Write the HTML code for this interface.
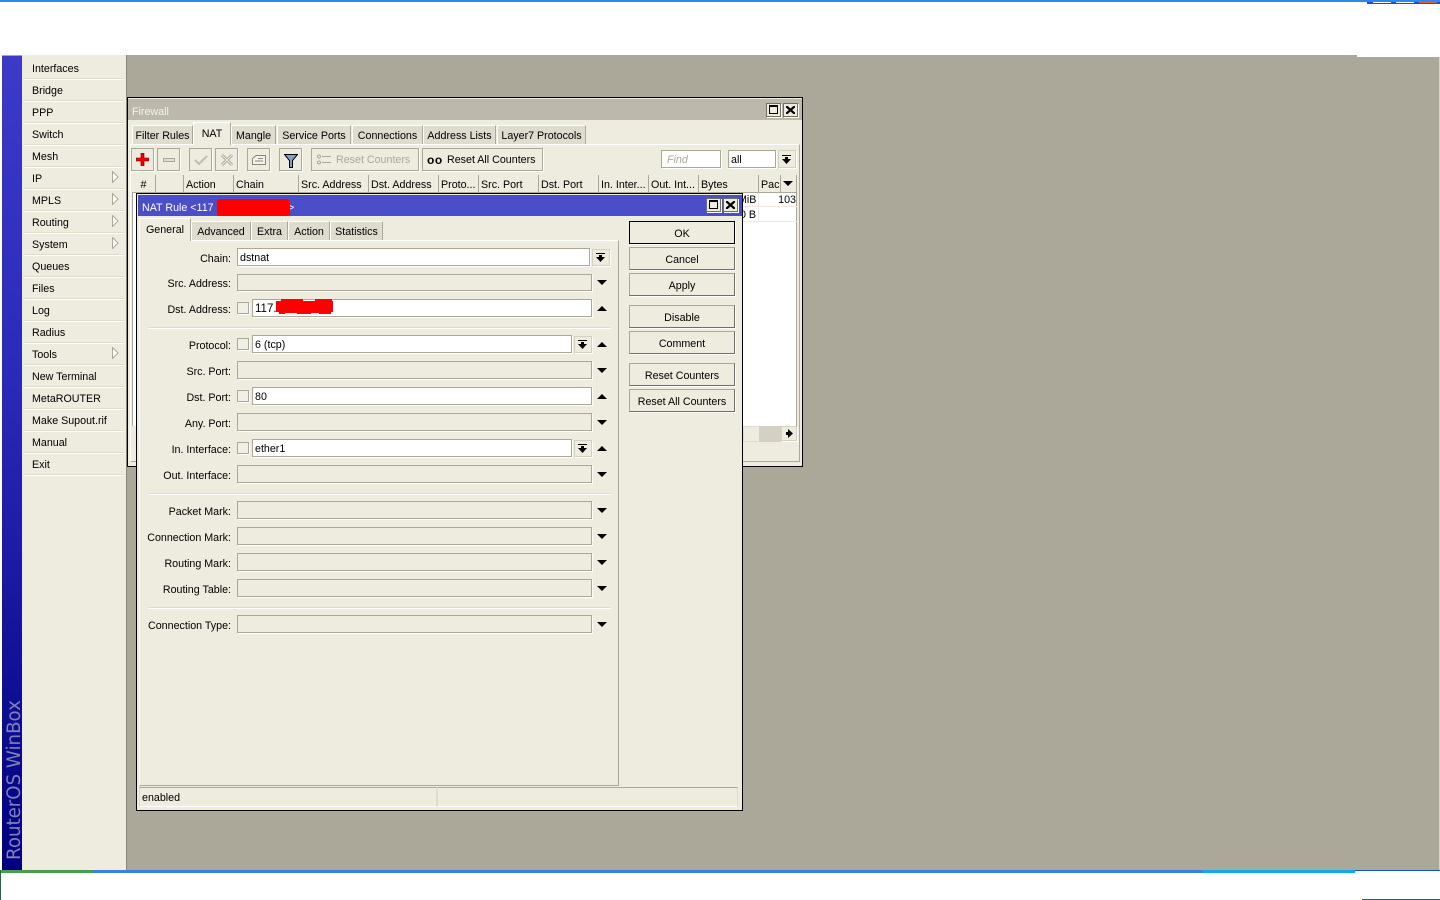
<!DOCTYPE html>
<html><head><meta charset="utf-8"><title>WinBox</title>
<style>
html,body{margin:0;padding:0;background:#fff;width:1440px;height:900px;overflow:hidden}
body{position:relative;font-family:"Liberation Sans",sans-serif;font-size:10.7px;color:#000}
div,svg,span.t{position:absolute;box-sizing:border-box}
.t{position:absolute;white-space:pre;line-height:14px;margin-top:1px}
.r{text-align:right}
.c{display:flex;align-items:center;justify-content:center;white-space:pre;padding-top:2px}
.sep{height:2px;background:#dfdccd;border-bottom:1px solid #fff}
.b{background:#eeebdf;border:1px solid #aca899;border-right-color:#716f64;border-bottom-color:#716f64;box-shadow:1px 1px 0 #fff}
.tb{background:#eeebdf;border:1px solid #aca899;box-shadow:1px 1px 0 #fff}
.i{background:#fff;border:1px solid #aca899;box-shadow:1px 1px 0 #fff;padding-left:2px;line-height:18px;white-space:pre}
.d{background:#eeebdf;border:1px solid #aca899;box-shadow:1px 1px 0 #fff}
.dd{background:#eeebdf;border:1px solid #d4d1c2;box-shadow:1px 1px 0 #fff}
.tab{background:#dedbcf;border-top:1px solid #fff;border-left:1px solid #fff;border-right:1px solid #aca899}
.h{background:#eeebdf;border-right:1px solid #aca899;border-bottom:1px solid #aca899;padding-left:2px;line-height:20px;white-space:pre;overflow:hidden}
.up{width:0;height:0;border-left:5px solid transparent;border-right:5px solid transparent;border-bottom:5px solid #000}
.dn{width:0;height:0;border-left:5px solid transparent;border-right:5px solid transparent;border-top:5px solid #000}
.ar{width:7px;height:12px}
.mb{background:#eeebdf;border:1px solid #716f64;box-shadow:1px 1px 0 #fff}
.g{color:#aca899}
</style></head><body>

<div style="left:0;top:0;width:1440px;height:2px;background:#2f86ee"></div>
<div style="left:1367px;top:2px;width:73px;height:2px;background:#0a55d8"></div>
<div style="left:1373px;top:2px;width:18px;height:1px;background:#fff"></div>
<div style="left:1396px;top:2px;width:18px;height:1px;background:#fff"></div>
<div style="left:1419px;top:2px;width:18px;height:1px;background:#e06040"></div>

<div style="left:2px;top:55px;width:1355px;height:2px;background:#aba899"></div>
<div style="left:2px;top:57px;width:1437px;height:813px;background:#aba899"></div>
<div style="left:1439px;top:57px;width:1px;height:813px;background:#d8d5c8"></div>

<div style="left:2px;top:56px;width:20px;height:814px;background:linear-gradient(#3b3bc8,#2a2ab8 40%,#00007f)"></div>
<div class="t" style="left:-65px;top:769px;width:160px;height:20px;line-height:20px;font-family:'DejaVu Sans',sans-serif;font-size:18.200px;color:#8080b8;transform:rotate(-90deg);text-align:left">RouterOS WinBox</div>

<div style="left:22px;top:55px;width:105px;height:815px;background:#eeebdf;border-right:1px solid #8a8778"></div>
<div class="t" style="left:32px;top:61px">Interfaces</div><div class="sep" style="left:24px;top:78px;width:100px"></div>
<div class="t" style="left:32px;top:83px">Bridge</div><div class="sep" style="left:24px;top:100px;width:100px"></div>
<div class="t" style="left:32px;top:105px">PPP</div><div class="sep" style="left:24px;top:122px;width:100px"></div>
<div class="t" style="left:32px;top:127px">Switch</div><div class="sep" style="left:24px;top:144px;width:100px"></div>
<div class="t" style="left:32px;top:149px">Mesh</div><div class="sep" style="left:24px;top:166px;width:100px"></div>
<div class="t" style="left:32px;top:171px">IP</div><div class="sep" style="left:24px;top:188px;width:100px"></div>
<div class="t" style="left:32px;top:193px">MPLS</div><div class="sep" style="left:24px;top:210px;width:100px"></div>
<div class="t" style="left:32px;top:215px">Routing</div><div class="sep" style="left:24px;top:232px;width:100px"></div>
<div class="t" style="left:32px;top:237px">System</div><div class="sep" style="left:24px;top:254px;width:100px"></div>
<div class="t" style="left:32px;top:259px">Queues</div><div class="sep" style="left:24px;top:276px;width:100px"></div>
<div class="t" style="left:32px;top:281px">Files</div><div class="sep" style="left:24px;top:298px;width:100px"></div>
<div class="t" style="left:32px;top:303px">Log</div><div class="sep" style="left:24px;top:320px;width:100px"></div>
<div class="t" style="left:32px;top:325px">Radius</div><div class="sep" style="left:24px;top:342px;width:100px"></div>
<div class="t" style="left:32px;top:347px">Tools</div><div class="sep" style="left:24px;top:364px;width:100px"></div>
<div class="t" style="left:32px;top:369px">New Terminal</div><div class="sep" style="left:24px;top:386px;width:100px"></div>
<div class="t" style="left:32px;top:391px">MetaROUTER</div><div class="sep" style="left:24px;top:408px;width:100px"></div>
<div class="t" style="left:32px;top:413px">Make Supout.rif</div><div class="sep" style="left:24px;top:430px;width:100px"></div>
<div class="t" style="left:32px;top:435px">Manual</div><div class="sep" style="left:24px;top:452px;width:100px"></div>
<div class="t" style="left:32px;top:457px">Exit</div><div class="sep" style="left:24px;top:474px;width:100px"></div>
<svg class="ar" style="left:112px;top:171px" viewBox="0 0 7 12"><path d="M.5.5L6 6 .5 11.5z" fill="#fff" stroke="#aca899"/></svg>
<svg class="ar" style="left:112px;top:193px" viewBox="0 0 7 12"><path d="M.5.5L6 6 .5 11.5z" fill="#fff" stroke="#aca899"/></svg>
<svg class="ar" style="left:112px;top:215px" viewBox="0 0 7 12"><path d="M.5.5L6 6 .5 11.5z" fill="#fff" stroke="#aca899"/></svg>
<svg class="ar" style="left:112px;top:237px" viewBox="0 0 7 12"><path d="M.5.5L6 6 .5 11.5z" fill="#fff" stroke="#aca899"/></svg>
<svg class="ar" style="left:112px;top:347px" viewBox="0 0 7 12"><path d="M.5.5L6 6 .5 11.5z" fill="#fff" stroke="#aca899"/></svg>

<!-- Firewall window -->
<div style="left:127px;top:97px;width:676px;height:370px;background:#eeebdf;border:1px solid #000"></div>
<div style="left:128px;top:99px;width:674px;height:21px;background:#bcb8ab"></div>
<div class="t" style="left:132px;top:104px;color:#f4f2ea">Firewall</div>
<div class="mb" style="left:766px;top:103px;width:15px;height:14px"><div style="left:2px;top:1px;width:9px;height:9px;border:1px solid #000;border-top-width:2px"></div></div>
<div class="mb" style="left:783px;top:103px;width:15px;height:14px"><svg style="left:2px;top:2px" width="9" height="8" viewBox="0 0 9 8"><path d="M0 0L9 8M9 0L0 8" stroke="#000" stroke-width="2.200"/></svg></div>

<div style="left:130px;top:144px;width:670px;height:318px;border:1px solid #fff;border-right-color:#aca899;border-bottom-color:#aca899"></div>
<div class="tab c" style="left:132px;top:125px;width:61px;height:19px">Filter Rules</div>
<div class="tab c" style="left:193px;top:122px;width:38px;height:23px;background:#eeebdf;padding-bottom:3px;z-index:1">NAT</div>
<div class="tab c" style="left:231px;top:125px;width:45px;height:19px">Mangle</div>
<div class="tab c" style="left:277px;top:125px;width:74px;height:19px">Service Ports</div>
<div class="tab c" style="left:352px;top:125px;width:71px;height:19px">Connections</div>
<div class="tab c" style="left:423px;top:125px;width:73px;height:19px">Address Lists</div>
<div class="tab c" style="left:497px;top:125px;width:89px;height:19px">Layer7 Protocols</div>

<div class="tb" style="left:131px;top:148px;width:23px;height:23px"><svg style="left:4px;top:4px" width="13" height="13" viewBox="0 0 13 13"><path d="M5 0h3v5h5v3H8v5H5V8H0V5h5z" fill="#f00" stroke="#400" stroke-width=".6"/></svg></div>
<div class="tb" style="left:157px;top:148px;width:23px;height:23px"><div style="left:5px;top:9px;width:12px;height:4px;background:#dfdccd;border:1px solid #aca899"></div></div>
<div class="tb" style="left:189px;top:148px;width:23px;height:23px"><svg style="left:4px;top:5px" width="14" height="12" viewBox="0 0 14 12"><path d="M1 6l4 4 8-8" fill="none" stroke="#c0bdae" stroke-width="2"/></svg></div>
<div class="tb" style="left:215px;top:148px;width:23px;height:23px"><svg style="left:5px;top:5px" width="12" height="12" viewBox="0 0 12 12"><path d="M1 1L11 11M11 1L1 11" fill="none" stroke="#aca899" stroke-width="3"/><path d="M1 1L11 11M11 1L1 11" fill="none" stroke="#eeebdf" stroke-width="1"/></svg></div>
<div class="tb" style="left:247px;top:148px;width:23px;height:23px"><svg style="left:4px;top:5px" width="14" height="12" viewBox="0 0 14 12"><path d="M.5 4.500L4 1.500h9.500v9H.5zM6 4.500h5M3 7h8" fill="#f4f2ea" stroke="#8a8778"/></svg></div>
<div class="tb" style="left:279px;top:148px;width:23px;height:23px"><svg style="left:4px;top:5px" width="14" height="14" viewBox="0 0 14 14"><path d="M.5.500h13L8.500 6.500v7h-3v-7z" fill="#7fa0c8" stroke="#000"/></svg></div>
<div class="tb" style="left:311px;top:148px;width:108px;height:23px"><svg style="left:5px;top:5px" width="14" height="11" viewBox="0 0 14 11"><path d="M5 2.500h9M5 8.500h9" stroke="#aca899"/><circle cx="2" cy="2.500" r="1.500" fill="none" stroke="#aca899"/><circle cx="2" cy="8.500" r="1.500" fill="none" stroke="#aca899"/></svg><span class="t g" style="left:24px;top:3px">Reset Counters</span></div>
<div class="tb" style="left:422px;top:148px;width:121px;height:23px"><span class="t" style="left:4px;top:3px;font-weight:bold;font-size:12px;letter-spacing:.5px">oo</span><span class="t" style="left:24px;top:3px">Reset All Counters</span></div>
<div class="i" style="left:661px;top:150px;width:60px;height:18px;color:#aca899;font-style:italic;padding-left:5px">Find</div>
<div class="i" style="left:728px;top:150px;width:48px;height:18px">all</div>
<div class="dd" style="left:778px;top:150px;width:18px;height:18px"><svg style="left:3px;top:4px" width="9" height="9" viewBox="0 0 9 9"><path d="M0 0h9v1H0zM3 2h3v2h3L4.500 9 0 4h3z"/></svg></div>

<!-- table -->
<div style="left:132px;top:192px;width:665px;height:234px;background:#fff;border-left:1px solid #aca899;border-right:1px solid #aca899"></div>
<div class="h c" style="left:132px;top:175px;width:24px;height:18px;padding:2px 0 0">#</div>
<div class="h" style="left:156px;top:175px;width:28px;height:18px"></div>
<div class="h" style="left:184px;top:175px;width:50px;height:18px">Action</div>
<div class="h" style="left:234px;top:175px;width:65px;height:18px">Chain</div>
<div class="h" style="left:299px;top:175px;width:70px;height:18px">Src. Address</div>
<div class="h" style="left:369px;top:175px;width:70px;height:18px">Dst. Address</div>
<div class="h" style="left:439px;top:175px;width:40px;height:18px">Proto...</div>
<div class="h" style="left:479px;top:175px;width:60px;height:18px">Src. Port</div>
<div class="h" style="left:539px;top:175px;width:60px;height:18px">Dst. Port</div>
<div class="h" style="left:599px;top:175px;width:50px;height:18px">In. Inter...</div>
<div class="h" style="left:649px;top:175px;width:50px;height:18px">Out. Int...</div>
<div class="h" style="left:699px;top:175px;width:60px;height:18px">Bytes</div>
<div class="h" style="left:759px;top:175px;width:22px;height:18px">Pac</div>
<div class="h" style="left:781px;top:175px;width:16px;height:18px"></div>
<div class="dn" style="left:783px;top:181px"></div>
<div style="left:743px;top:206px;width:54px;height:1px;background:#f5e6df"></div>
<div style="left:743px;top:221px;width:54px;height:1px;background:#f5e6df"></div>
<div style="left:758px;top:193px;width:1px;height:28px;background:#f5e6df"></div>
<div class="t" style="left:738px;top:192px;width:18px;text-align:right;overflow:hidden">MiB</div>
<div class="t" style="left:770px;top:192px;width:26px;text-align:right">103</div>
<div class="t" style="left:738px;top:207px;width:18px;text-align:right">0 B</div>
<div style="left:743px;top:426px;width:17px;height:16px;background:#eeebdf;border:1px solid #dfdccd"></div>
<div style="left:759px;top:426px;width:22px;height:16px;background:#d4d1c4"></div>
<div class="dd" style="left:781px;top:426px;width:16px;height:15px"><svg style="left:4px;top:2px" width="7" height="9" viewBox="0 0 7 9"><path d="M0 3h2V0l5 4.500L2 9V6H0z"/></svg></div>

<!-- NAT Rule -->
<div style="left:136px;top:193px;width:607px;height:618px;background:#eeebdf;border:1px solid #000"></div>
<div style="left:138px;top:195px;width:604px;height:21px;background:#4a4ec8"></div>
<div class="t" style="left:142px;top:200px;color:#fff">NAT Rule &lt;117</div>
<div class="t" style="left:288px;top:200px;color:#fff">&gt;</div>
<div style="left:217px;top:199px;width:73px;height:17px;background:#f00;border-radius:3px"></div>
<div class="mb" style="left:706px;top:198px;width:15px;height:14px"><div style="left:2px;top:1px;width:9px;height:9px;border:1px solid #000;border-top-width:2px"></div></div>
<div class="mb" style="left:723px;top:198px;width:15px;height:14px"><svg style="left:2px;top:2px" width="9" height="8" viewBox="0 0 9 8"><path d="M0 0L9 8M9 0L0 8" stroke="#000" stroke-width="2.200"/></svg></div>

<div style="left:139px;top:240px;width:480px;height:546px;border:1px solid #fff;border-right-color:#aca899;border-bottom-color:#aca899"></div>
<div class="tab c" style="left:139px;top:218px;width:52px;height:23px;background:#eeebdf;padding-bottom:2px;z-index:1">General</div>
<div class="tab c" style="left:191px;top:221px;width:60px;height:19px">Advanced</div>
<div class="tab c" style="left:251px;top:221px;width:37px;height:19px">Extra</div>
<div class="tab c" style="left:288px;top:221px;width:42px;height:19px">Action</div>
<div class="tab c" style="left:330px;top:221px;width:53px;height:19px">Statistics</div>

<div class="t r" style="left:140px;top:251px;width:91px">Chain:</div>
<div class="i" style="left:237px;top:248px;width:353px;height:18px">dstnat</div>
<div class="dd" style="left:592px;top:249px;width:18px;height:17px"><svg style="left:3px;top:3px" width="9" height="9" viewBox="0 0 9 9"><path d="M0 0h9v1H0zM3 2h3v2h3L4.500 9 0 4h3z"/></svg></div>

<div class="t r" style="left:140px;top:276px;width:91px">Src. Address:</div>
<div class="d" style="left:237px;top:274px;width:355px;height:17px"></div>
<div class="dn" style="left:597px;top:280px"></div>

<div class="t r" style="left:140px;top:302px;width:91px">Dst. Address:</div>
<div class="d" style="left:237px;top:302px;width:12px;height:12px;background:#f2f0e6"></div>
<div class="i" style="left:252px;top:299px;width:340px;height:18px;font-size:11.500px">117.</div>
<svg style="left:275px;top:298px" width="59" height="18" viewBox="0 0 59 18"><path d="M1 3h5V1h22v2h12V1h17v2h1v11h-2v2H44v-1h-8v1H22v-1H10v1H4v-2H1z" fill="#f00"/></svg>
<div class="up" style="left:597px;top:306px"></div>

<div class="sep" style="left:148px;top:327px;width:463px"></div>

<div class="t r" style="left:140px;top:338px;width:91px">Protocol:</div>
<div class="d" style="left:237px;top:338px;width:12px;height:12px;background:#f2f0e6"></div>
<div class="i" style="left:252px;top:335px;width:320px;height:18px">6 (tcp)</div>
<div class="dd" style="left:574px;top:336px;width:18px;height:17px"><svg style="left:3px;top:3px" width="9" height="9" viewBox="0 0 9 9"><path d="M0 0h9v1H0zM3 2h3v2h3L4.500 9 0 4h3z"/></svg></div>
<div class="up" style="left:597px;top:342px"></div>

<div class="t r" style="left:140px;top:364px;width:91px">Src. Port:</div>
<div class="d" style="left:237px;top:361px;width:355px;height:18px"></div>
<div class="dn" style="left:597px;top:368px"></div>

<div class="t r" style="left:140px;top:390px;width:91px">Dst. Port:</div>
<div class="d" style="left:237px;top:390px;width:12px;height:12px;background:#f2f0e6"></div>
<div class="i" style="left:252px;top:387px;width:340px;height:18px">80</div>
<div class="up" style="left:597px;top:394px"></div>

<div class="t r" style="left:140px;top:416px;width:91px">Any. Port:</div>
<div class="d" style="left:237px;top:413px;width:355px;height:18px"></div>
<div class="dn" style="left:597px;top:420px"></div>

<div class="t r" style="left:140px;top:442px;width:91px">In. Interface:</div>
<div class="d" style="left:237px;top:442px;width:12px;height:12px;background:#f2f0e6"></div>
<div class="i" style="left:252px;top:439px;width:320px;height:18px">ether1</div>
<div class="dd" style="left:574px;top:440px;width:18px;height:17px"><svg style="left:3px;top:3px" width="9" height="9" viewBox="0 0 9 9"><path d="M0 0h9v1H0zM3 2h3v2h3L4.500 9 0 4h3z"/></svg></div>
<div class="up" style="left:597px;top:446px"></div>

<div class="t r" style="left:140px;top:468px;width:91px">Out. Interface:</div>
<div class="d" style="left:237px;top:465px;width:355px;height:18px"></div>
<div class="dn" style="left:597px;top:472px"></div>

<div class="sep" style="left:148px;top:493px;width:463px"></div>

<div class="t r" style="left:140px;top:504px;width:91px">Packet Mark:</div>
<div class="d" style="left:237px;top:501px;width:355px;height:18px"></div>
<div class="dn" style="left:597px;top:508px"></div>
<div class="t r" style="left:140px;top:530px;width:91px">Connection Mark:</div>
<div class="d" style="left:237px;top:527px;width:355px;height:18px"></div>
<div class="dn" style="left:597px;top:534px"></div>
<div class="t r" style="left:140px;top:556px;width:91px">Routing Mark:</div>
<div class="d" style="left:237px;top:553px;width:355px;height:18px"></div>
<div class="dn" style="left:597px;top:560px"></div>
<div class="t r" style="left:140px;top:582px;width:91px">Routing Table:</div>
<div class="d" style="left:237px;top:579px;width:355px;height:18px"></div>
<div class="dn" style="left:597px;top:586px"></div>

<div class="sep" style="left:148px;top:607px;width:463px"></div>

<div class="t r" style="left:140px;top:618px;width:91px">Connection Type:</div>
<div class="d" style="left:237px;top:615px;width:355px;height:18px"></div>
<div class="dn" style="left:597px;top:622px"></div>

<div class="b c" style="left:629px;top:221px;width:106px;height:23px;border-color:#000">OK</div>
<div class="b c" style="left:629px;top:247px;width:106px;height:23px">Cancel</div>
<div class="b c" style="left:629px;top:273px;width:106px;height:23px">Apply</div>
<div class="b c" style="left:629px;top:305px;width:106px;height:23px">Disable</div>
<div class="b c" style="left:629px;top:331px;width:106px;height:23px">Comment</div>
<div class="b c" style="left:629px;top:363px;width:106px;height:23px">Reset Counters</div>
<div class="b c" style="left:629px;top:389px;width:106px;height:23px">Reset All Counters</div>

<div style="left:139px;top:787px;width:298px;height:20px;border:1px solid #dfdccd;border-color:#aca899 #dfdccd #fff #dfdccd;padding-left:2px;line-height:20px">enabled</div>
<div style="left:437px;top:787px;width:301px;height:20px;border:1px solid #dfdccd;border-color:#aca899 #dfdccd #fff #dfdccd"></div>

<!-- bottom bars -->
<div style="left:0;top:870px;width:1355px;height:3px;background:#3a80e0"></div>
<div style="left:0;top:870px;width:93px;height:3px;background:#4aa04a"></div>
<div style="left:0;top:870px;width:1px;height:30px;background:#1a6a50"></div>
<div style="left:1203px;top:870px;width:152px;height:3px;background:#10a8f0"></div>
<div style="left:1355px;top:870px;width:85px;height:1px;background:#0a55d8"></div>
<div style="left:1362px;top:899px;width:78px;height:1px;background:#1a55c0"></div>
</body></html>
